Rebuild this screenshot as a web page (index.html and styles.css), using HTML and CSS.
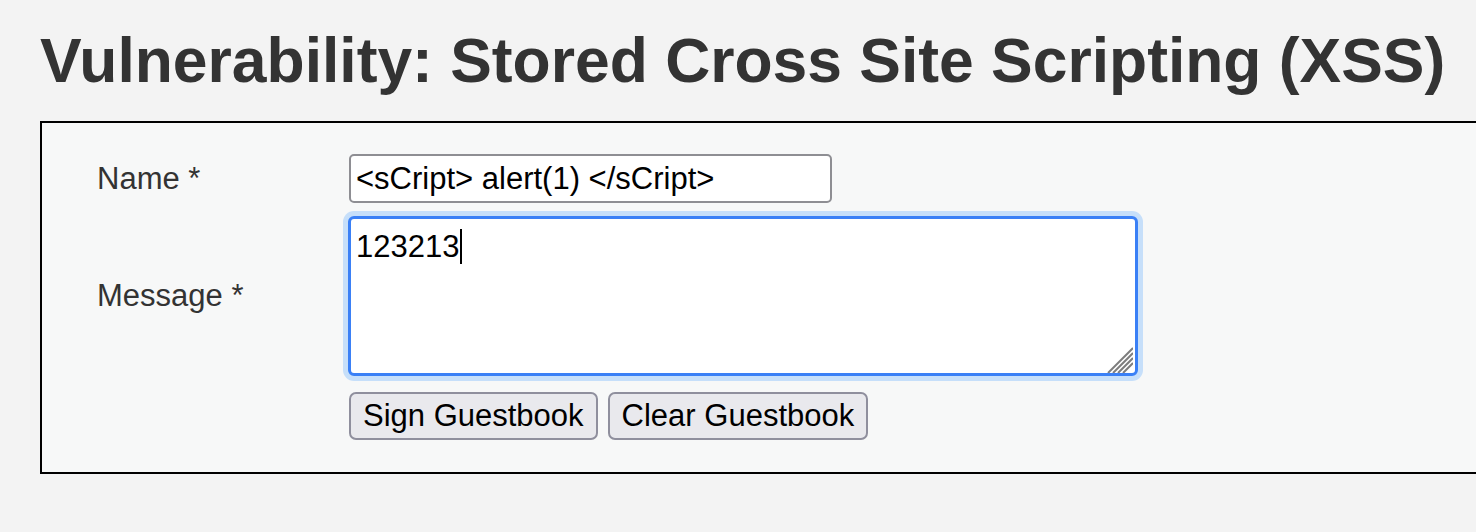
FILE: index.html
```html
<!DOCTYPE html>
<html lang="en">
<head>
<meta charset="utf-8">
<title>Vulnerability: Stored Cross Site Scripting (XSS)</title>
<link rel="stylesheet" href="styles.css">
</head>
<body>
<div class="page">
  <h1 class="title">Vulnerability: Stored Cross Site Scripting (XSS)</h1>
  <div class="panel">
    <form class="guest-form" onsubmit="return false;">
      <label class="lbl" for="txtName">Name *</label>
      <input id="txtName" class="name-field" type="text" value="&lt;sCript&gt; alert(1) &lt;/sCript&gt;">
      <label class="lbl">Message *</label>
      <div class="msg-field" role="textbox" aria-multiline="true">123213<span class="caret"></span><svg class="grip" viewBox="0 0 26 26" width="26" height="26"><g stroke="#7d7d7d" stroke-width="2" stroke-linecap="butt"><line x1="1" y1="26" x2="26" y2="1"/><line x1="6" y1="26" x2="26" y2="6"/><line x1="11" y1="26" x2="26" y2="11"/><line x1="16" y1="26" x2="26" y2="16"/></g></svg></div>
      <div class="btns">
        <button class="btn" type="button">Sign Guestbook</button>
        <button class="btn" type="button">Clear Guestbook</button>
      </div>
    </form>
  </div>
</div>
</body>
</html>
```
FILE: styles.css
```css
html {
  overflow: hidden;
}

body {
  margin: 0;
  background: #f3f3f3;
  font-family: "Liberation Sans", Arial, sans-serif;
  color: #333;
}

.page {
  padding-left: 40px;
}

.title {
  margin: 26px 0 0;
  font-size: 62.4px;
  line-height: 70px;
  font-weight: bold;
  color: #333;
  white-space: nowrap;
}

.panel {
  margin-top: 25px;
  margin-right: -20px;
  border: 2px solid #000;
  background: #f7f8f8;
  padding: 31px 0 32px 55px;
}

.guest-form {
  display: grid;
  grid-template-columns: 252px auto;
  row-gap: 13px;
  align-items: center;
  justify-content: start;
  margin: 0;
}

.lbl {
  font-size: 31px;
  color: #333;
}

.name-field {
  width: 483px;
  height: 49px;
  box-sizing: border-box;
  margin: 0;
  padding: 0 5px;
  border: 2px solid #8e8e93;
  border-radius: 5px;
  background: #fff;
  font: 31px "Liberation Sans", Arial, sans-serif;
  color: #000;
  outline: none;
}

.msg-field {
  position: relative;
  width: 790px;
  height: 160px;
  box-sizing: border-box;
  margin-left: -1px;
  padding: 10px 5px;
  border: 3px solid #3a80f6;
  border-radius: 6px;
  box-shadow: 0 0 0 5px #c6dffa;
  background: #fff;
  font-size: 31px;
  line-height: 35px;
  color: #000;
}

.caret {
  display: inline-block;
  width: 2px;
  height: 35px;
  margin-left: 1px;
  background: #000;
  vertical-align: top;
}

.grip {
  position: absolute;
  right: 2px;
  bottom: 0;
  width: 26px;
  height: 26px;
}

.btns {
  grid-column: 2;
  display: flex;
  gap: 10px;
  margin-top: 3px;
}

.btn {
  height: 48px;
  box-sizing: border-box;
  margin: 0;
  padding: 0 12px;
  border: 2px solid #8f8f9d;
  border-radius: 7px;
  background: #e9e9ed;
  font: 31px "Liberation Sans", Arial, sans-serif;
  color: #000;
}
```
